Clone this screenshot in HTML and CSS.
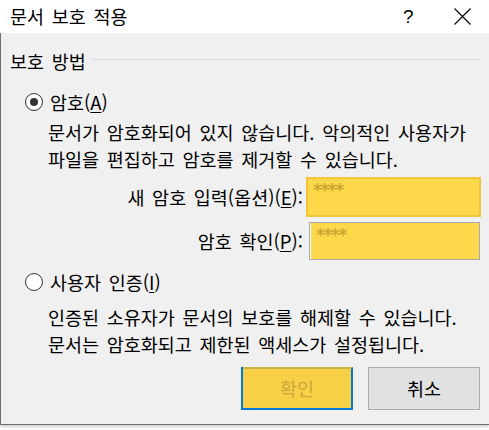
FILE: index.html
```html
<!DOCTYPE html>
<html lang="ko">
<head>
<meta charset="utf-8">
<link rel="stylesheet" href="styles.css">
</head>
<body>
<div class="window">
  <div class="titlebar">
    <span class="title">문서 보호 적용</span>
    <span class="help">?</span>
    <span class="close">
      <svg width="17" height="17" viewBox="0 0 17 17"><path d="M0.5 0.5 L16.5 16.5 M16.5 0.5 L0.5 16.5" stroke="#000" stroke-width="1.1" fill="none"/></svg>
    </span>
  </div>
  <div class="content">
    <div class="group-head">
      <span class="group-label">보호 방법</span>
      <span class="group-line"></span>
    </div>
    <div class="radio-row r1">
      <span class="radio checked"></span>
      <span class="radio-label">암호(<u>A</u>)</span>
    </div>
    <div class="desc d1">문서가 암호화되어 있지 않습니다. 악의적인 사용자가<br>파일을 편집하고 암호를 제거할 수 있습니다.</div>
    <div class="field-row f1">
      <span class="field-label">새 암호 입력(옵션)(<u>E</u>):</span>
      <span class="field focused"><span class="mask">****</span></span>
    </div>
    <div class="field-row f2">
      <span class="field-label">암호 확인(<u>P</u>):</span>
      <span class="field plain"><span class="mask">****</span></span>
    </div>
    <div class="radio-row r2">
      <span class="radio"></span>
      <span class="radio-label">사용자 인증(<u>I</u>)</span>
    </div>
    <div class="desc d2">인증된 소유자가 문서의 보호를 해제할 수 있습니다.<br>문서는 암호화되고 제한된 액세스가 설정됩니다.</div>
    <div class="buttons">
      <span class="btn ok">확인</span>
      <span class="btn cancel">취소</span>
    </div>
  </div>
</div>
</body>
</html>
```
FILE: styles.css
```css
* { box-sizing: border-box; }
html, body { margin: 0; padding: 0; background: #fff; }
body {
  width: 489px;
  height: 430px;
  overflow: hidden;
  font-family: "Noto Sans CJK KR", "Noto Sans", sans-serif;
  font-size: 18.5px;
  word-spacing: 2.5px;
  color: #000;
}
u { text-decoration: underline; text-underline-offset: 2px; text-decoration-thickness: 1px; }
.window {
  width: 489px;
  height: 425px;
  box-shadow: 0 2px 3px rgba(0,0,0,0.18);
}
.titlebar {
  height: 33px;
  background: #fff;
  display: flex;
  align-items: center;
  padding-left: 10px;
}
.title { flex: 1; line-height: 1; }
.help {
  font-family: "Liberation Sans", sans-serif;
  font-size: 19px;
  width: 10px;
  margin-right: 41px;
  line-height: 1;
}
.close {
  width: 17px;
  height: 17px;
  margin-right: 18px;
  display: flex;
}
.content {
  height: 392px;
  background: #f0f0f0;
  border-left: 1px solid #6e6e6e;
  border-bottom: 1px solid #6e6e6e;
  padding-top: 17px;
}
.group-head {
  height: 22px;
  display: flex;
  align-items: center;
  padding-left: 9px;
  padding-right: 8px;
}
.group-label { line-height: 1; }
.group-line {
  flex: 1;
  height: 1px;
  background: #d9d9d9;
  margin-left: 6px;
  margin-top: -3px;
}
.radio-row {
  height: 22px;
  display: flex;
  align-items: center;
  padding-left: 24px;
}
.r1 { margin-top: 19px; }
.r2 { margin-top: 11px; }
.radio {
  width: 18px;
  height: 18px;
  border: 1.5px solid #333;
  border-radius: 50%;
  background: #fff;
  display: flex;
  align-items: center;
  justify-content: center;
}
.radio.checked::after {
  content: "";
  width: 8px;
  height: 8px;
  border-radius: 50%;
  background: #333;
}
.radio-label { margin-left: 7px; line-height: 1; }
.desc {
  padding-left: 47px;
  line-height: 27px;
  white-space: nowrap;
}
.d1 { margin-top: 6px; }
.d2 { margin-top: 11px; }
.field-row {
  display: flex;
  justify-content: flex-end;
  align-items: center;
  padding-right: 8px;
}
.f1 { margin-top: 4px; height: 40px; }
.f2 { margin-top: 5px; height: 38px; padding-right: 9px; }
.field-label { line-height: 1; }
.f1 .field-label { margin-right: 3px; }
.f2 .field-label { margin-right: 6px; }
.field {
  height: 100%;
  background: #fed84b;
  display: block;
  padding-left: 5px;
}
.focused { width: 175px; border: 2px solid #f2c53d; padding-top: 3px; }
.plain { width: 171px; border: 1px solid #a9a9a9; box-shadow: inset 1px 0 0 #fff; padding-top: 4px; padding-left: 6px; }
.mask {
  display: block;
  font-family: "DejaVu Sans", sans-serif;
  font-weight: bold;
  font-size: 17px;
  color: #c9a730;
  letter-spacing: -1.5px;
  line-height: 17px;
  height: 13px;
}
.buttons {
  display: flex;
  justify-content: flex-end;
  gap: 15px;
  padding-right: 9px;
  margin-top: 9px;
}
.btn {
  width: 112px;
  height: 43px;
  display: flex;
  align-items: center;
  justify-content: center;
  line-height: 1;
}
.ok {
  background: #f7d046;
  border: 2px solid #0078d7;
  border-top: 2px solid #c9b448;
  color: #c9a83a;
  position: relative;
}
.ok::before {
  content: "";
  position: absolute;
  left: -2px; top: -2px;
  width: 2px; height: 2px;
  background: #0078d7;
}
.cancel {
  background: #e1e1e1;
  border: 1px solid #adadad;
}
```
